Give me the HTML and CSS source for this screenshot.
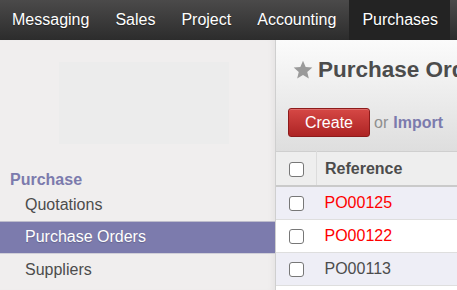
FILE: index.html
```html
<!DOCTYPE html>
<html>
<head>
<meta charset="utf-8">
<link rel="stylesheet" href="styles.css">
</head>
<body>
<div class="topbar">
  <a class="menu-item">Messaging</a>
  <a class="menu-item">Sales</a>
  <a class="menu-item">Project</a>
  <a class="menu-item">Accounting</a>
  <a class="menu-item active">Purchases</a>
</div>
<div class="main">
  <aside class="sidebar">
    <div class="logo-wrap"><div class="logo"></div></div>
    <div class="sec-title">Purchase</div>
    <a class="nav-item">Quotations</a>
    <a class="nav-item selected">Purchase Orders</a>
    <a class="nav-item">Suppliers</a>
  </aside>
  <section class="content">
    <div class="header">
      <div class="title-row">
        <svg class="star" width="20" height="20" viewBox="0 0 24 24"><path d="M12 1l3.2 7.4 8 .7-6.1 5.3 1.9 7.9L12 18.1l-7 4.2 1.9-7.9L.8 9.1l8-.7z" fill="#9a9a9a"/></svg>
        <h1 class="title">Purchase Orders</h1>
      </div>
      <div class="actions">
        <button class="btn-create">Create</button>
        <span class="or">or</span>
        <a class="import">Import</a>
      </div>
    </div>
    <table class="list">
      <thead>
        <tr><th class="cb-cell"><span class="cb"></span></th><th class="ref">Reference</th></tr>
      </thead>
      <tbody>
        <tr class="odd"><td class="cb-cell"><span class="cb"></span></td><td class="red">PO00125</td></tr>
        <tr><td class="cb-cell"><span class="cb"></span></td><td class="red">PO00122</td></tr>
        <tr class="odd"><td class="cb-cell"><span class="cb"></span></td><td>PO00113</td></tr>
        <tr><td class="cb-cell"><span class="cb"></span></td><td></td></tr>
      </tbody>
    </table>
  </section>
</div>
</body>
</html>
```
FILE: styles.css
```css
html, body {
  margin: 0;
  padding: 0;
  width: 457px;
  height: 290px;
  overflow: hidden;
  font-family: "Liberation Sans", Arial, sans-serif;
  background: #fff;
}
.topbar {
  height: 40px;
  display: flex;
  align-items: stretch;
  background: linear-gradient(#4b4a4a, #2c2c2c);
}
.menu-item {
  display: flex;
  align-items: center;
  padding: 0 13px;
  color: #fff;
  font-size: 16px;
  text-shadow: 0 1px 1px rgba(0,0,0,0.4);
  white-space: nowrap;
  flex: none;
}
.menu-item:first-child { padding-left: 12px; }
.menu-item.active {
  background: #232323;
  padding: 0 12px 0 13px;
}
.main {
  display: flex;
  height: 250px;
}
.sidebar {
  width: 275px;
  flex: none;
  background: #f0eeee;
  border-right: 1px solid #cfcfcf;
  box-shadow: inset -6px 0 6px -4px rgba(0,0,0,0.05);
  display: flex;
  flex-direction: column;
}
.logo-wrap {
  display: flex;
  justify-content: center;
  padding: 22px 0 0 13px;
  height: 105px;
  box-sizing: border-box;
}
.logo {
  width: 170px;
  height: 82px;
  background: #ececec;
}
.sec-title {
  color: #7c7bad;
  font-weight: bold;
  font-size: 16px;
  padding: 26px 0 0 10px;
  line-height: 18px;
}
.nav-item {
  display: block;
  color: #4c4c4c;
  font-size: 16px;
  line-height: 18px;
  padding: 7px 0 7px 25px;
}
.nav-item.selected {
  background: #7c7bad;
  color: #fff;
  border-top: 1px solid #bdbccc;
  border-bottom: 1px solid #d0cfd8;
  padding: 6px 0 7px 25px;
  text-shadow: 0 1px 1px rgba(0,0,0,0.2);
}
.content {
  flex: 1;
  min-width: 0;
  overflow: hidden;
}
.header {
  height: 111px;
  background: linear-gradient(#fbfbfb, #dedede);
  padding: 18px 0 0 17px;
  box-sizing: border-box;
}
.title-row {
  display: flex;
  align-items: center;
  white-space: nowrap;
}
.star { flex: none; margin-right: 5px; }
.title {
  margin: 0;
  font-size: 22.5px;
  font-weight: bold;
  color: #4c4c4c;
  line-height: 24px;
}
.actions {
  margin: 26px 0 0 -5px;
  display: flex;
  align-items: center;
  white-space: nowrap;
}
.btn-create {
  flex: none;
  width: 82px;
  height: 29px;
  border: 1px solid #8d1b1b;
  border-radius: 3px;
  background: linear-gradient(#d64845, #ad2424);
  color: #fff;
  font-family: inherit;
  font-size: 16px;
  padding: 0;
  box-shadow: inset 0 1px 0 rgba(255,255,255,0.2);
}
.or {
  color: #8f8f8f;
  font-size: 16px;
  margin-left: 4px;
}
.import {
  color: #7c7bad;
  font-weight: bold;
  font-size: 16px;
  margin-left: 5px;
}
.list {
  border-collapse: collapse;
  width: 100%;
  font-size: 16px;
  border-top: 1px solid #cfcfcf;
}
.list th {
  background: #eeeeee;
  height: 33px;
  text-align: left;
  color: #4c4c4c;
  font-weight: bold;
  border-bottom: 2px solid #cacaca;
  padding: 0;
}
.list td {
  height: 32px;
  padding: 0;
  border-bottom: 1px solid #dedede;
  color: #4c4c4c;
}
.list tr.odd td { background: #eeeef6; }
.list .cb-cell {
  width: 40px;
  text-align: center;
}
.list th.cb-cell { border-right: 1px solid #dcdcdc; }
.list th.ref { padding-left: 8px; }
.list td:not(.cb-cell) { padding-left: 8px; }
.cb {
  display: inline-block;
  width: 13px;
  height: 13px;
  border: 1px solid #777;
  border-radius: 3px;
  background: #fff;
  vertical-align: middle;
}
.red { color: #f00 !important; }
```
